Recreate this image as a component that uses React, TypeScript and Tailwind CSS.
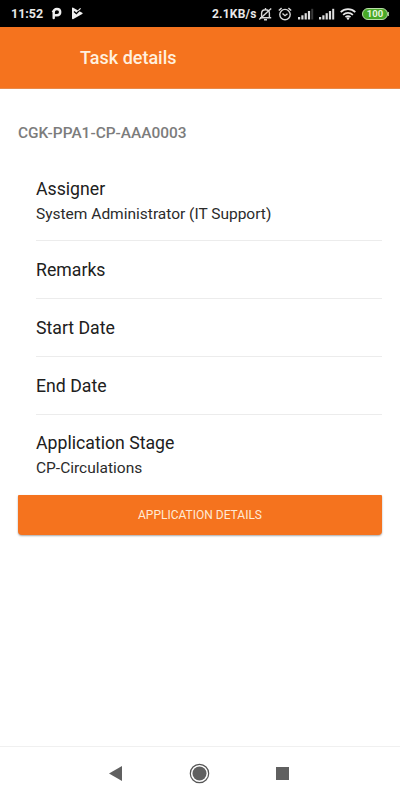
import React from 'react';

type Task = { label: string; value?: string };

const fields: Task[] = [
  { label: 'Assigner', value: 'System Administrator (IT Support)' },
  { label: 'Remarks' },
  { label: 'Start Date' },
  { label: 'End Date' },
  { label: 'Application Stage', value: 'CP-Circulations' },
];

function Signal({ faded = false }: { faded?: boolean }) {
  return (
    <svg width="16" height="12" viewBox="0 0 16 12" fill="#dedede">
      <rect x="0" y="9" width="2.2" height="2.5" />
      <rect x="3.3" y="7.3" width="2.2" height="4.2" />
      <rect x="6.6" y="5.2" width="2.2" height="6.3" />
      <rect x="9.9" y="3" width="2.2" height="8.5" />
      <rect x="13.2" y="0.8" width="2" height="10.7" fill={faded ? '#383838' : '#dedede'} />
    </svg>
  );
}

function StatusBar() {
  return (
    <div className="flex h-[27px] items-center bg-black pl-[11px] text-[#e8e8e8]">
      <span className="w-[40px] whitespace-nowrap text-[12.5px] font-bold leading-4">11:52</span>
      <svg width="11" height="13" viewBox="0 0 11 13" fill="none" stroke="#f0f0f0" strokeWidth="2.4" strokeLinecap="round">
        <path d="M2.7 11V5.4C2.7 3.2 4 2 5.9 2s3.3 1.3 3.3 3.1-1.4 3.2-3.2 3.2H4.6" />
        <path d="M1.5 4.4L3.4 2.7" strokeWidth="1.4" />
      </svg>
      <svg className="ml-[9px]" width="12" height="13" viewBox="0 0 12 13">
        <path d="M1 1.2C1 .5 1.7.4 2.2.7L11.2 5.7c.6.3.6.9 0 1.2L2.4 12c-.7.4-1.4.1-1.4-.6Z" fill="#f0f0f0" />
        <path d="M3 4.4l2.4 2.2L9.6 2.2" fill="none" stroke="#000" strokeWidth="1.3" />
        <path d="M7.2 3.7L9.6 1.3" fill="none" stroke="#f0f0f0" strokeWidth="1.2" />
      </svg>
      <span className="ml-[129px] w-[46px] whitespace-nowrap text-[12px] font-bold leading-4 tracking-[0.2px]">2.1KB/s</span>
      <svg width="15" height="14" viewBox="0 0 15 14" fill="none" stroke="#d8d8d8" strokeWidth="1.4">
        <path d="M2 10.7h11.2M3.6 10.3V6.3C3.6 4 5.2 2.7 7.5 2.7s3.9 1.3 3.9 3.6v4M7.5 1v1.7M6 12.7h3" />
        <path d="M1.2 12.6L13.2 1.4" />
      </svg>
      <svg className="ml-[5px]" width="14" height="14" viewBox="0 0 14 14" fill="none" stroke="#d8d8d8" strokeWidth="1.4">
        <circle cx="7" cy="7.6" r="5.2" />
        <path d="M.8 3.5l2.8-2.4M13.2 3.5l-2.8-2.4M4.5 6.5L7 8.7l2.5-2" />
      </svg>
      <span className="ml-[6px]"><Signal faded /></span>
      <span className="ml-[5px]"><Signal /></span>
      <svg className="ml-[5px]" width="16" height="12" viewBox="0 0 16 12" fill="none" stroke="#e6e6e6" strokeWidth="1.7">
        <path d="M.7 4.2c4.1-4 10.5-4 14.6 0M3.1 6.8c2.8-2.6 7-2.6 9.8 0M5.5 9.2c1.4-1.3 3.6-1.3 5 0" />
        <circle cx="8" cy="10.5" r="1.2" fill="#e6e6e6" stroke="none" />
      </svg>
      <div className="ml-[6px] flex h-[12px] w-[26px] items-center justify-center rounded-full border border-[#b9dda9] bg-[#48a827] pt-px text-[9.5px] font-bold leading-none text-[#e5f5dd]">100</div>
      <span className="h-1 w-px bg-[#9eba90]" />
    </div>
  );
}

export default function App() {
  return (
    <div className="flex h-[800px] w-[400px] flex-col overflow-hidden bg-white font-['Roboto',sans-serif]">
      <StatusBar />
      <header className="flex h-[62px] items-center border-b border-[#e88a4a] bg-[#f5731e] pl-[80px]">
        <h1 className="text-[18px] font-medium leading-6 text-[#fff0df]">Task details</h1>
      </header>
      <main className="flex-1 px-[18px] pt-[34px]">
        <h2 className="h-[42px] text-[15.45px] font-medium leading-5 text-[#7c7c7c]">CGK-PPA1-CP-AAA0003</h2>
        <div className="pl-[18px]">
          {fields.map((field, index) => (
            <div
              key={field.label}
              className={
                index === 0
                  ? 'h-[76px] border-b border-[#ececec] pt-[14px]'
                  : index === 4
                    ? 'h-[80px] pt-[18px]'
                    : 'h-[58px] border-b border-[#ececec] pt-[19px]'
              }
            >
              <div className="text-[17.7px] leading-5 text-[#202020]">{field.label}</div>
              {field.value && <div className="mt-[5px] text-[15.5px] leading-5 text-[#2b2b2b]">{field.value}</div>}
            </div>
          ))}
        </div>
        <button className="block h-[40px] w-full rounded-t-[1px] rounded-b-[4px] bg-[#f5731e] pb-px text-[12px] leading-5 text-[#ffead5] shadow-[0_1px_2px_rgba(0,0,0,0.35)]">
          APPLICATION DETAILS
        </button>
      </main>
      <nav className="flex h-[54px] items-center border-t border-[#f0f0f0] pb-px pl-[109px]">
        <svg width="13" height="15" viewBox="0 0 13 15" fill="#606060"><path d="M0 7.5L13 0v15Z" /></svg>
        <svg className="ml-[67px]" width="21" height="21" viewBox="0 0 21 21"><circle cx="10.5" cy="10.5" r="9.2" fill="none" stroke="#555" strokeWidth="1.2" /><circle cx="10.5" cy="10.5" r="7" fill="#606060" /></svg>
        <div className="ml-[66px] h-[13px] w-[13px] bg-[#606060]" />
      </nav>
    </div>
  );
}
